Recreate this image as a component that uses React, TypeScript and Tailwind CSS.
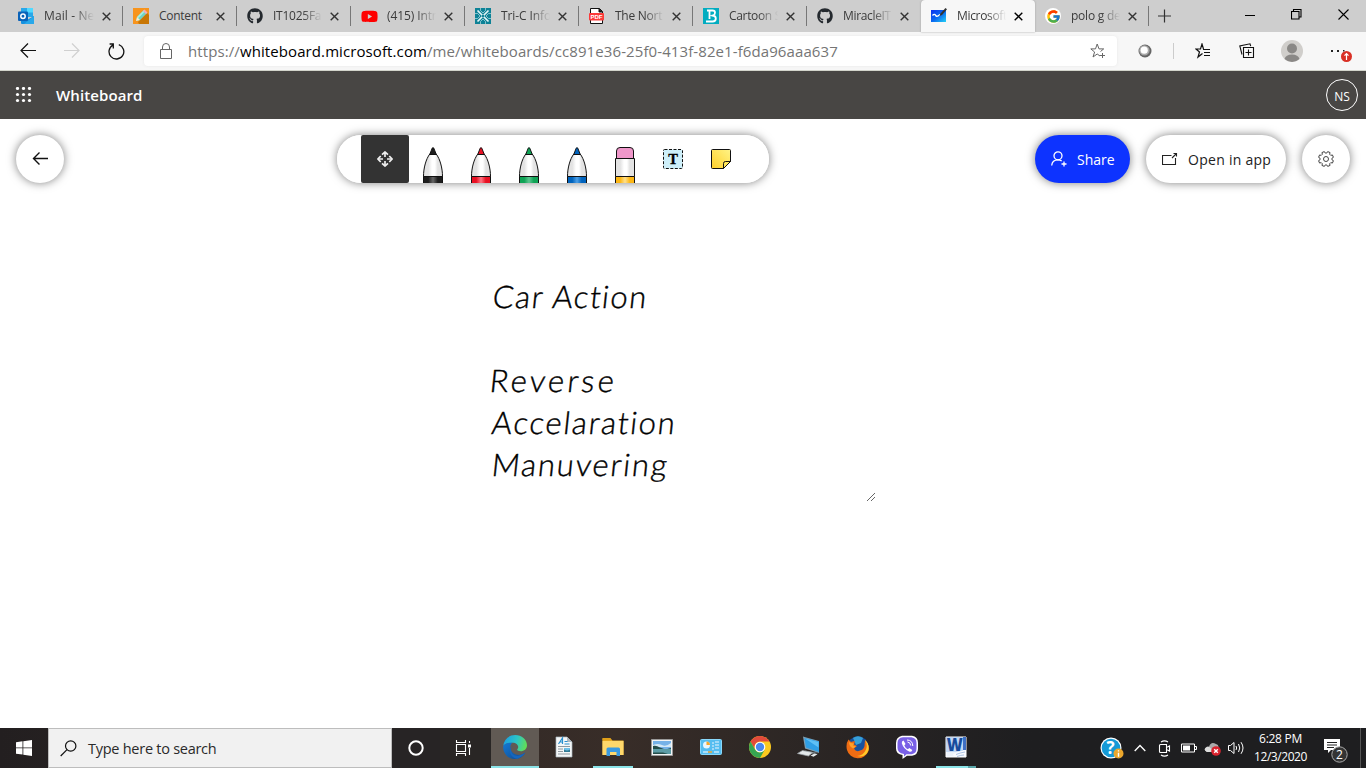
import React, { useLayoutEffect, useRef } from 'react';
import { FaGithub, FaYoutube } from 'react-icons/fa';
import { FaViber } from 'react-icons/fa';
import { FcGoogle } from 'react-icons/fc';

/** A run of text whose tracking is adjusted so that it spans `w` pixels. */
function Fit({ w, className = '', children }: { w: number; className?: string; children: React.ReactNode }) {
  const ref = useRef<HTMLSpanElement>(null);
  useLayoutEffect(() => {
    const el = ref.current;
    if (!el) return;
    el.style.letterSpacing = '0px';
    const n = (el.textContent || '').length;
    const natural = el.offsetWidth;
    if (n > 0) el.style.letterSpacing = `${(w - natural) / n}px`;
  }, [w]);
  return (
    <span ref={ref} className={`inline-block whitespace-pre ${className}`}>
      {children}
    </span>
  );
}

const OutlookIcon = () => (
  <svg width="16" height="16" viewBox="0 0 16 16">
    <path d="M3 0h12v9H3z" fill="#28a8ea" />
    <path d="M9 0h6v4.500H9z" fill="#50d9ff" />
    <path d="M3 4.500h6V9H3z" fill="#0358a7" />
    <path d="M3 8l6 4 7-4v7a1 1 0 0 1-1 1H4a1 1 0 0 1-1-1z" fill="#1490df" />
    <path d="M16 8v7a1 1 0 0 1-1 1H6z" fill="#28a8ea" />
    <rect y="3.500" width="10" height="9.500" rx="1" fill="#0a62b8" />
    <circle cx="5" cy="8.200" r="2.200" fill="none" stroke="#fff" strokeWidth="1.500" />
  </svg>
);

const PencilIcon = () => (
  <svg width="16" height="16" viewBox="0 0 16 16">
    <rect width="16" height="16" fill="#f7941d" />
    <path d="M5 14l9-9 2 2v9H6z" fill="#c87604" />
    <path d="M3 13l1-4 7-7 3 3-7 7z" fill="#6fd3c4" />
    <path d="M4 9l7-7 1.200 1.200-7 7z" fill="#a9eee0" />
    <path d="M3 13l1-4 3 3z" fill="#ffe9c8" />
    <path d="M10 3l1.500-1.500 3 3L13 6z" fill="#f5a9b8" />
  </svg>
);

const TriCIcon = () => (
  <svg width="16" height="16" viewBox="0 0 16 16">
    <rect width="16" height="16" fill="#0e8296" />
    <g stroke="#e3f5f7" strokeWidth="1.700" fill="none">
      <path d="M2.500 2.500l11 11M13.500 2.500l-11 11" />
      <path d="M5.500 0v2.500L8 5l2.500-2.500V0M5.500 16v-2.500L8 11l2.500 2.500V16M0 5.500h2.500L5 8l-2.500 2.500H0M16 5.500h-2.500L11 8l2.500 2.500H16" strokeWidth=".8" opacity=".7" />
    </g>
    <circle cx="8" cy="8" r="1.200" fill="#0e8296" />
  </svg>
);

const PdfIcon = () => (
  <svg width="16" height="16" viewBox="0 0 16 16">
    <path d="M1.500.5h9l3 3v12h-12z" fill="#fff" stroke="#111" />
    <path d="M10 .5v3.500h3.500" fill="#111" stroke="#111" />
    <rect x="0" y="5" width="15" height="7.500" rx="1" fill="#fb3a3a" />
    <text x="7.500" y="11" fontSize="6" fontWeight="700" fontFamily="Liberation Sans, sans-serif" textAnchor="middle" fill="#fff">PDF</text>
  </svg>
);

const BIcon = () => (
  <svg width="16" height="16" viewBox="0 0 16 16">
    <rect width="16" height="16" fill="#02acc0" />
    <path d="M4 2.500h5.500q2.500 0 2.500 2.300 0 2-2 2.700 2.800.6 2.800 3 0 3-3.300 3H3M6.500 3v8" fill="none" stroke="#fff" strokeWidth="1.800" />
    <path d="M8.500 7.500H10" stroke="#fff" strokeWidth="1.300" />
  </svg>
);

const BoardIcon = () => (
  <svg width="16" height="16" viewBox="0 0 16 16">
    <defs>
      <linearGradient id="board" x1="0" y1="0" x2="1" y2="1">
        <stop offset="0" stopColor="#0a30f0" />
        <stop offset=".5" stopColor="#0a66f0" />
        <stop offset="1" stopColor="#23d2f5" />
      </linearGradient>
    </defs>
    <path d="M0 2h15v12H0z" fill="url(#board)" />
    <path d="M1.500 7.500q2-2 3-.3t2.500.8l2-1.500" fill="none" stroke="#fff" strokeWidth="1.400" />
    <path d="M8.500 8l1-2.500L14.500 0 16 1.300 11 7z" fill="#333" />
  </svg>
);

const GithubTab = () => <FaGithub size={16} color="#24292e" />;
const YoutubeTab = () => (
  <span className="relative flex h-4 w-4 items-center justify-center">
    <FaYoutube size={17} color="#ff0000" className="shrink-0" />
  </span>
);
const GoogleTab = () => (
  <span className="flex h-4 w-4 items-center justify-center rounded-full bg-white">
    <FcGoogle size={15} />
  </span>
);

const tabs = [
  { label: 'Mail - Ne', w: 50, Icon: OutlookIcon },
  { label: 'Content', w: 43, Icon: PencilIcon },
  { label: 'IT1025Fa', w: 48, Icon: GithubTab },
  { label: '(415) Intr', w: 50, Icon: YoutubeTab },
  { label: 'Tri-C Info', w: 50, Icon: TriCIcon },
  { label: 'The Nort', w: 47, Icon: PdfIcon },
  { label: 'Cartoon S', w: 52, Icon: BIcon },
  { label: 'MiracleIT', w: 48, Icon: GithubTab },
  { label: 'Microsoft', w: 50, Icon: BoardIcon, active: true },
  { label: 'polo g de', w: 50, Icon: GoogleTab },
];

function TabStrip() {
  return (
    <div className="flex h-8 bg-[#cecece] pl-[9px]">
      {tabs.map(({ label, w, Icon, active }, i) => (
        <div
          key={i}
          className={
            'flex h-8 w-[114px] shrink-0 items-center ' +
            (i === 0 ? 'pl-[9px] ' : 'pl-[10px] ') +
            (active ? 'rounded-t bg-[#f7f7f7] shadow-[0_0_2px_#999]' : '')
          }
        >
          <span className="h-4 w-4 shrink-0"><Icon /></span>
          <div
            className={
              'ml-2.5 h-5 shrink-0 overflow-hidden text-[12px] leading-5 text-[#3b3b3b] ' +
              (i === 0 ? 'w-[50px] ' : 'w-[49px] ') +
              (i === 1 ? '' : 'mask-r-from-60% mask-r-to-100%')
            }
          >
            <Fit w={w}>{label}</Fit>
          </div>
          <svg className={'ml-[8px] shrink-0 ' + (active ? 'text-black' : 'text-[#333]')} width="9" height="9" viewBox="0 0 9 9">
            <path d="M.7.700l7.600 7.600M8.300.7L.7 8.300" stroke="currentColor" strokeWidth="1.400" />
          </svg>
          {active || i === 7 ? null : <span className="ml-auto h-5 w-px bg-[#777]" />}
        </div>
      ))}
      <svg className="ml-[9px] mt-[9px]" width="13" height="14" viewBox="0 0 13 14">
        <path d="M6.500 .5v13M0 7h13" stroke="#333" strokeWidth="1.200" />
      </svg>
      <div className="ml-auto flex h-7 items-center">
        <svg className="mr-9" width="10" height="11" viewBox="0 0 10 11"><path d="M0 6.500h10" stroke="#000" /></svg>
        <svg className="mr-9" width="11" height="11" viewBox="0 0 11 11">
          <path d="M.5 2.500h7.500v7.500h-7.500zM2.500 2.500v-2h7.500v7.500h-2" fill="none" stroke="#000" strokeWidth="1.100" />
        </svg>
        <svg className="mr-[17px]" width="11" height="11" viewBox="0 0 11 11"><path d="M.5.5l10 10M10.500.5l-10 10" stroke="#000" strokeWidth="1.100" /></svg>
      </div>
    </div>
  );
}

function AddressRow() {
  return (
    <div className="flex h-[39px] items-center border-b border-[#d3d5cc] bg-[#f7f7f7] pl-5">
      <svg width="16" height="16" viewBox="0 0 16 16"><path d="M16 7.500H1M8 .5l-7 7 7 7" fill="none" stroke="#111" strokeWidth="1.200" /></svg>
      <svg className="ml-7" width="16" height="16" viewBox="0 0 16 16"><path d="M0 7.500h15M8 .5l7 7-7 7" fill="none" stroke="#d0d0d0" strokeWidth="1.200" /></svg>
      <svg className="ml-7" width="17" height="17" viewBox="0 0 17 17">
        <path d="M10.800 1.600a7.400 7.400 0 1 1-5.900.5M1.600 1h3.700v4.500" fill="none" stroke="#111" strokeWidth="1.300" />
      </svg>
      <div className="ml-[19px] flex h-[30px] w-[973px] items-center rounded bg-white pl-4 shadow-[0_0_3px_#e6e6e6]">
        <svg width="12" height="17" viewBox="0 0 12 17">
          <path d="M.5 6.500h11v9H.5zM2.500 6.500V4a3.500 3.500 0 0 1 7 0v2.500" fill="none" stroke="#666" />
        </svg>
        <Fit w={650} className="ml-4 text-[15px] leading-5 text-[#757575]">
          https://<span className="text-black">whiteboard.microsoft.com</span>/me/whiteboards/cc891e36-25f0-413f-82e1-f6da96aaa637
        </Fit>
        <svg className="ml-auto mr-[11px]" width="16" height="16" viewBox="0 0 16 16">
          <path d="M10 13l-2.800-2L3 14l1.600-5L.8 5.900h4.700L7.200 1 9 5.900h4.700L10.500 8.500" fill="none" stroke="#666" />
          <path d="M12.500 10v5M10 12.500h5" stroke="#666" />
        </svg>
      </div>
      <svg className="ml-[21px]" width="14" height="14" viewBox="0 0 14 14">
        <circle cx="7" cy="7" r="6.500" fill="#656565" />
        <circle cx="6.400" cy="6.400" r="5.200" fill="#a9a9a9" />
        <circle cx="6.200" cy="6.200" r="3.600" fill="#fff" />
      </svg>
      <span className="ml-[21px] h-4 w-px bg-[#ccc]" />
      <svg className="ml-[21px]" width="16" height="16" viewBox="0 0 16 16">
        <path d="M7.500 10.500L3 14l1.500-5L1 6h4.500L7 1l1.500 5M8 6.500h7M9 9.500h6M9 12.500h6" fill="none" stroke="#111" strokeWidth="1.200" />
      </svg>
      <svg className="ml-[28px]" width="16" height="16" viewBox="0 0 16 16">
        <path d="M4.500 4.500h10v10h-10zM9.500 6.500v6M6.500 9.500h6M3 11.500L.8 3 11 .8l.7 2.400" fill="none" stroke="#111" strokeWidth="1.100" />
      </svg>
      <svg className="ml-[26px]" width="22" height="22" viewBox="0 0 22 22">
        <circle cx="11" cy="11" r="11" fill="#d0cecb" />
        <circle cx="11" cy="8.500" r="5" fill="#8a8886" />
        <path d="M3.500 19q1.300-4.500 7.500-4.500t7.500 4.500q-3.500 3-7.500 3t-7.500-3" fill="#8a8886" />
      </svg>
      <svg className="ml-[27px] mt-2.5" width="24" height="22" viewBox="0 0 24 22">
        <path d="M1 5h2v2H1zM7 5h2v2H7zM13 5h1.500v1.500H13z" fill="#222" />
        <circle cx="16.500" cy="11.500" r="5.500" fill="#d93025" />
        <path d="M16.500 15V9M14.500 10.700l2-2 2 2" fill="none" stroke="#fff" strokeWidth="1.200" />
      </svg>
    </div>
  );
}

function AppHeader() {
  return (
    <div className="flex h-12 items-center bg-[#484644] pl-[15px] pr-2">
      <svg width="17" height="16" viewBox="0 0 17 16" fill="#fff">
        {[1.500, 7.500, 13.500].map((y) => [2.500, 8.500, 14.500].map((x) => <circle key={`${x}-${y}`} cx={x} cy={y} r="1.600" />))}
      </svg>
      <Fit w={86} className="ml-6 text-[15px] font-semibold text-white">Whiteboard</Fit>
      <span className="ml-auto flex h-8 w-8 items-center justify-center rounded-full border border-white pt-[3px] text-[12px] text-white">NS</span>
    </div>
  );
}

function Pen({ id, dark, light }: { id: string; dark: string; light: string }) {
  return (
    <svg width="48" height="48" viewBox="0 0 48 48">
      <defs>
        <linearGradient id={id}>
          <stop offset=".25" stopColor={dark} />
          <stop offset=".5" stopColor={light} />
          <stop offset=".75" stopColor={dark} />
        </linearGradient>
        <linearGradient id={`${id}-body`}>
          <stop offset=".25" stopColor="#e3e3e3" />
          <stop offset=".45" stopColor="#fff" />
          <stop offset=".6" stopColor="#fff" />
          <stop offset=".75" stopColor="#e3e3e3" />
        </linearGradient>
      </defs>
      <path d="M14.500 41.500C14.500 33 17 24 20.800 19h6.400C31 24 33.500 33 33.500 41.500z" fill={`url(#${id}-body)`} stroke="#111" />
      <path d="M14.500 41.500h19V49h-19z" fill={`url(#${id})`} stroke="#111" />
      <path d="M20.700 19.500l2.500-6.300q.8-1.400 1.600 0l2.500 6.300z" fill={dark} stroke="#111" />
    </svg>
  );
}

function Toolbar() {
  return (
    <div className="flex h-12 w-[432px] overflow-hidden rounded-full bg-white px-6">
      <div className="flex h-12 w-12 items-center justify-center rounded-[2px] bg-[#333]">
        <svg width="16" height="16" viewBox="0 0 16 16">
          <g fill="none" stroke="#eee" strokeWidth="1.700">
            <path d="M5 3.700L8 1l3 2.700M5 12.300L8 15l3-2.700M3.700 5L1 8l2.700 3M12.300 5L15 8l-2.700 3" />
            <path d="M8 1.500V6M8 10v4.500M1.500 8H6M10 8h4.500" />
          </g>
        </svg>
      </div>
      <Pen id="pen-black" dark="#1d1d1d" light="#666" />
      <Pen id="pen-red" dark="#e81123" light="#ff7684" />
      <Pen id="pen-green" dark="#0fa355" light="#5ec590" />
      <Pen id="pen-blue" dark="#0063bd" light="#4d9fe6" />
      <svg width="48" height="48" viewBox="0 0 48 48">
        <defs>
          <linearGradient id="eraser">
            <stop offset=".25" stopColor="#fdb714" />
            <stop offset=".5" stopColor="#ffe08c" />
            <stop offset=".75" stopColor="#fdb714" />
          </linearGradient>
        </defs>
        <path d="M15.500 24V16q0-3.500 3.500-3.500h10q3.500 0 3.500 3.500v8z" fill="#ef97ca" stroke="#111" />
        <path d="M14.500 23.500h19v18h-19z" fill="url(#pen-black-body)" stroke="#111" />
        <path d="M14.500 41.500h19V49h-19z" fill="url(#eraser)" stroke="#111" />
      </svg>
      <svg width="48" height="48" viewBox="0 0 48 48">
        <rect x="14.500" y="14.500" width="19" height="19" rx="1" fill="#cdeffa" stroke="#111" strokeDasharray="3 1.500" />
        <text x="24" y="29" textAnchor="middle" fontFamily="Liberation Serif, serif" fontWeight="700" fontSize="14.500" stroke="#000" strokeWidth=".3">T</text>
      </svg>
      <svg width="48" height="48" viewBox="0 0 48 48">
        <defs>
          <linearGradient id="note" x1="0" y1="1" x2="1" y2="0">
            <stop offset="0" stopColor="#ffd02b" />
            <stop offset="1" stopColor="#fff486" />
          </linearGradient>
        </defs>
        <path d="M15.500 14.500h17q1 0 1 1v11l-7 7h-11q-1 0-1-1v-17q0-1 1-1z" fill="url(#note)" stroke="#111" />
        <path d="M26.500 33.500v-5q0-2 2-2h5z" fill="#ffe65a" stroke="#111" />
      </svg>
    </div>
  );
}

const shadow = 'shadow-[0_0_10px_rgba(0,0,0,0.5)]';

const gearPath = (() => {
  const pts: string[] = [];
  for (let i = 0; i < 8; i++) {
    const base = (i * Math.PI) / 4 + Math.PI / 8;
    [[-0.26, 6], [-0.17, 7.600], [0.17, 7.600], [0.26, 6]].forEach(([a, r]) =>
      pts.push(`${(8 + r * Math.sin(base + a)).toFixed(2)} ${(8 - r * Math.cos(base + a)).toFixed(2)}`),
    );
  }
  return `M${pts.join('L')}Z`;
})();

function Whiteboard() {
  return (
    <div className="flex h-[609px] flex-col bg-white p-4">
      <div className="flex h-12">
        <button className={`flex h-12 w-12 items-center justify-center rounded-full bg-white ${shadow}`}>
          <svg width="16" height="14" viewBox="0 0 16 14"><path d="M16 6.500H1.500M7.500.5l-6 6 6 6" fill="none" stroke="#111" strokeWidth="1.400" /></svg>
        </button>
        <div className={`ml-[273px] rounded-full ${shadow}`}><Toolbar /></div>
        <div className="ml-auto flex gap-4">
          <button className={`flex h-12 w-[95px] items-center rounded-full bg-[#0d33ff] pl-4 text-white ${shadow}`}>
            <svg width="17" height="16" viewBox="0 0 17 16">
              <circle cx="7" cy="4.800" r="4" fill="none" stroke="#fff" strokeWidth="1.300" />
              <path d="M.7 14.500C1 11 3.500 8.800 7 8.800q2 0 3.700 1.200M13 10.500v5M10.500 13h5" fill="none" stroke="#fff" strokeWidth="1.300" />
            </svg>
            <Fit w={38} className="ml-[9px] text-[14px] font-medium">Share</Fit>
          </button>
          <button className={`flex h-12 w-[140px] items-center rounded-full bg-white pl-4 text-[#222] ${shadow}`}>
            <svg width="16" height="14" viewBox="0 0 16 14"><path d="M9.500 3.500H.5v9h13V6M10 6l4.500-4.500M11.500 1.500h3v3" fill="none" stroke="#222" strokeWidth="1.100" /></svg>
            <Fit w={83} className="ml-[10px] text-[14px]">Open in app</Fit>
          </button>
          <button className={`flex h-12 w-12 items-center justify-center rounded-full bg-white ${shadow}`}>
            <svg width="16" height="16" viewBox="0 0 16 16">
              <path d={gearPath} fill="none" stroke="#333" strokeWidth=".9" />
              <circle cx="8" cy="8" r="2.500" fill="none" stroke="#333" strokeWidth=".9" />
            </svg>
          </button>
        </div>
      </div>
      <div className="ml-[469px] mt-[92px] flex h-[227px] w-[391px] flex-col font-['Lato',sans-serif] text-[31px] font-light leading-[42px] text-black [-webkit-text-stroke:0.4px_black]">
        <div className="flex h-[42px] pl-[8px]"><Fit w={156} className="-skew-x-6">Car Action</Fit></div>
        <div className="h-[42px]" />
        <div className="flex h-[42px] pl-[5px]"><Fit w={127} className="-skew-x-6">Reverse</Fit></div>
        <div className="flex h-[42px] pl-[7px]"><Fit w={185} className="-skew-x-6">Accelaration</Fit></div>
        <div className="flex h-[42px] pl-[7px]"><Fit w={177} className="-skew-x-6">Manuvering</Fit></div>
        <svg className="ml-auto mt-auto" width="10" height="10" viewBox="0 0 10 10"><path d="M1 9l8-8M5 9l4-4" stroke="#666" /></svg>
      </div>
    </div>
  );
}

const EdgeIcon = () => (
  <svg width="24" height="24" viewBox="0 0 24 24">
    <defs>
      <linearGradient id="edge-top" x1="0" y1=".3" x2="1" y2=".5">
        <stop offset="0" stopColor="#1b9de2" /><stop offset=".55" stopColor="#2cc5c7" /><stop offset="1" stopColor="#62dd55" />
      </linearGradient>
      <linearGradient id="edge-low" x1="0" y1="0" x2="1" y2="1">
        <stop offset="0" stopColor="#1478d4" /><stop offset="1" stopColor="#114a8b" />
      </linearGradient>
    </defs>
    <path d="M.2 10.800C1 4.500 6 0 12.200 0 18.700 0 24 4.500 24 10.300c0 3.700-3 6-6.300 6-2.700 0-4.200-.9-3.200-2.200 2-2.800-.3-6.400-5-6.400-4 0-7.500 1.200-9.300 3.100z" fill="url(#edge-top)" />
    <path d="M.2 11C1.800 8.500 5.400 7.500 9.500 7.700 6 10 6.300 18.300 14 19.800c3 .5 6-.3 8.300-2.200C20.300 21.500 16.500 24 12 24 5 24-.3 18 .2 11z" fill="url(#edge-low)" />
    <path d="M9.500 10.500C6 15 9 22 16 20.500c2.500-.4 4.500-1.400 6.300-2.900-1 2.400-4 5.200-7.800 6.100C8 23 4 16 9.500 10.500z" fill="#1666bd" />
  </svg>
);

const WordPadIcon = () => (
  <svg width="18" height="22" viewBox="0 0 18 22">
    <path d="M1 1h11l5 5v15H1z" fill="#f5f7f8" stroke="#a9b4bb" strokeWidth=".7" />
    <path d="M12 1v5h5z" fill="#aeb8bf" />
    <path d="M3.500 8l4-6v6M5 6h3M9.500 5.500h3M9.500 8h5" fill="none" stroke="#2a90cf" strokeWidth="1.200" />
    <path d="M3 10.500h12M3 13h5M3 15.500h5M3 18h12" stroke="#8f999f" />
    <path d="M9 12h6v4H9z" fill="#317b94" />
    <path d="M9 12h6v1.500q-3 2-6 0z" fill="#6fc0e8" />
  </svg>
);

const FolderIcon = () => (
  <svg width="22" height="20" viewBox="0 0 22 20">
    <path d="M.5 1.500h8l2 2h11V18H.5z" fill="#f0b228" />
    <path d="M.5 4h21v14H.5z" fill="#ffd86b" />
    <path d="M.5 1h8l1 2.500H.5z" fill="#e0a019" />
    <path d="M4.500 19v-7q0-1.500 1.500-1.500h10.500q1.500 0 1.500 1.500v7h-3.500v-4H8v4z" fill="#3b9ae0" />
  </svg>
);

const PictureIcon = () => (
  <svg width="22" height="17" viewBox="0 0 22 17">
    <path d="M.5.5h21v16H.5z" fill="#f4f4f4" stroke="#999" />
    <path d="M2 2h18v13H2z" fill="#76b2e8" />
    <path d="M2 6q5-2 9 0t9-2v4H2z" fill="#d3e8f6" />
    <path d="M2 7q3-1 7 1.500l4 1.500H2zM20 9q-4 1-7 1.500L20 11z" fill="#234d4a" />
    <path d="M2 10h18v5H2z" fill="#5c9ca6" />
    <path d="M2 13.500h10l5 1.500H2z" fill="#254d49" />
  </svg>
);

const PanelIcon = () => (
  <svg width="22" height="16" viewBox="0 0 22 16">
    <rect x=".5" y=".5" width="21" height="15" rx="1" fill="#55bdf0" stroke="#8ad8fa" />
    <circle cx="6.500" cy="6" r="3.500" fill="#e9f6fd" />
    <path d="M6.500 6V2.500A3.500 3.500 0 0 1 10 6z" fill="#f5a62c" />
    <path d="M12 4h2M12 7h2M12 10h2M15 3h4M15 6h4M15 9h4" stroke="#e9f6fd" strokeWidth="1.200" />
    <path d="M3 13h5M14 13h5" stroke="#fff" strokeWidth="1.200" />
    <path d="M8 13h4" stroke="#f5a62c" strokeWidth="1.400" />
  </svg>
);

const ChromeIcon = () => (
  <svg width="22" height="22" viewBox="0 0 22 22">
    <circle cx="11" cy="11" r="11" fill="#fbc91f" />
    <path d="M1.500 5.500A11 11 0 0 1 20.500 5.500H11A5.500 5.500 0 0 0 6.200 13.700z" fill="#e14a3b" />
    <path d="M1.500 5.500L6.200 13.700Q8 16.600 11 16.600L15.700 13.800 11 22A11 11 0 0 1 1.500 5.500z" fill="#35a552" />
    <circle cx="11" cy="11" r="5.300" fill="#fff" />
    <circle cx="11" cy="11" r="4.200" fill="#4a88ee" />
  </svg>
);

const PcIcon = () => (
  <svg width="23" height="22" viewBox="0 0 23 22">
    <path d="M6 .5l1.500.5L22 5v12L8 12.500z" fill="#7d9fb4" />
    <path d="M7.500 2L22 5.500v10.500L9 11.500z" fill="#2f9fe6" />
    <path d="M8 2.500l13.500 3.500v5.500z" fill="#5fc0f5" />
    <path d="M8 14.500l14 2.500-8 1-6-1.500z" fill="#70797e" />
    <path d="M.5 17.500l5-3 10 2-4 3.500z" fill="#e4e8ea" stroke="#9ca5a9" strokeWidth=".7" />
    <path d="M13.500 19.500l4-2 3 .7-4 2.500z" fill="#e4e8ea" />
  </svg>
);

const FirefoxIcon = () => (
  <svg width="23" height="23" viewBox="0 0 23 23">
    <circle cx="12" cy="10.500" r="10.300" fill="#18529e" />
    <path d="M7 2q5-3.500 10 0l-2 5-5 2z" fill="#37a0d8" />
    <path d="M2.500 3.500L5 6q2-1 4-.7L8 8.500l3 1.500-3 2.500q2 4 6 2 3.500-.5 4.500-4.500L19 4q5 5 3.500 11A11.300 11.300 0 0 1 1 14Q-.5 8 2.500 3.500z" fill="#ee6c13" />
    <path d="M19 4q3 5 1 9.500-2.500 6-9 6.500 9 2 11.500-6Q23.500 8 19 4z" fill="#ffc928" />
    <path d="M3 6l2 1 3 .5-1 2 3 1-3 2q-4-2-4-6.500z" fill="#ffa02a" />
  </svg>
);

const ViberIcon = () => (
  <svg width="24" height="24" viewBox="0 0 24 24">
    <path d="M7 .8h10q6 1 6 7v6q0 6-6 7h-5L7.500 24v-4Q1 19 1 13.500V8Q1 2 7 .8z" fill="#fff" />
    <path d="M8 2.300h8.500q5 .8 5 5.700v5.500q0 5-5 5.700h-5L9 21.500V19Q2.500 18 2.500 13V8q0-5 5.500-5.700z" fill="#7960e6" />
    <path d="M8.500 5.500q-2 .8-1.700 2.700 1.800 6 7.800 8.500 2 .3 2.700-1.800l-3-2-1.500 1.300q-2.500-1-3.500-3.600L10.500 9z" fill="#fff" />
    <path d="M12 5q5.500 0 5.800 6M12.500 7q3 .3 3.200 3.500" fill="none" stroke="#fff" />
  </svg>
);

const WordIcon = () => (
  <svg width="22" height="22" viewBox="0 0 22 22">
    <path d="M1 1h20v20H1z" fill="#edf3fb" stroke="#fff" />
    <path d="M18 1h3v13h-3z" fill="#3f6fc4" />
    <path d="M1 1h17v15H1z" fill="#c2d7f3" />
    <text x="9.700" y="15" textAnchor="middle" textLength="16" lengthAdjust="spacingAndGlyphs" fontFamily="Open Sans, sans-serif" fontSize="17" fontWeight="800" fill="#174b9c">W</text>
    <path d="M8 18q6-3 13-4v7H9z" fill="#fafcff" />
    <path d="M11 18.500q5-2 9-2.500M12 20.500q4-1.500 7-1.500" fill="none" stroke="#8eabd7" strokeWidth=".7" />
  </svg>
);

const apps = [
  { Icon: EdgeIcon, active: true },
  { Icon: WordPadIcon },
  { Icon: FolderIcon, open: true },
  { Icon: PictureIcon },
  { Icon: PanelIcon },
  { Icon: ChromeIcon },
  { Icon: PcIcon },
  { Icon: FirefoxIcon },
  { Icon: ViberIcon },
  { Icon: WordIcon, stacked: true },
];

function Taskbar() {
  return (
    <div className="flex h-10 bg-linear-to-r from-[#231f20] via-[#382d28] via-45% to-[#1e1e20] to-75%">
      <div className="flex w-12 items-center justify-center">
        <svg width="16" height="16" viewBox="0 0 16 16" fill="#fff"><path d="M0 2.200L6.500 1.300v6.200H0zM7.300 1.200L16 0v7.500H7.300zM0 8.300h6.500v6.300L0 13.800zM7.300 8.300H16V16l-8.700-1.300z" /></svg>
      </div>
      <div className="flex w-[344px] items-center border border-[#bdbdbd] bg-[#f1f1f1] pl-[11px]">
        <svg width="17" height="17" viewBox="0 0 17 17"><circle cx="10.700" cy="6" r="5.200" fill="none" stroke="#111" strokeWidth="1.200" /><path d="M7 9.700L.7 16" stroke="#111" strokeWidth="1.200" /></svg>
        <Fit w={128} className="ml-[11px] mt-px text-[14.500px] text-[#2a2a2a]">Type here to search</Fit>
      </div>
      <div className="flex w-12 items-center justify-center bg-[#272425]">
        <svg width="16" height="16" viewBox="0 0 16 16"><circle cx="8" cy="8" r="6.700" fill="none" stroke="#fff" strokeWidth="2" /></svg>
      </div>
      <div className="flex w-[51px] items-center bg-[#292625] pl-[15px]">
        <svg width="17" height="16" viewBox="0 0 17 16">
          <path d="M1.500 0v2.500h9V0M1.500 16v-2.500h9V16M1.500 4.500h9v7h-9zM14.500 1v2M14.500 8v7" fill="none" stroke="#fff" strokeWidth="1.100" />
          <path d="M13 4.500h3v3h-3z" fill="#fff" />
        </svg>
      </div>
      {apps.map(({ Icon, active, open, stacked }, i) => (
        <div key={i} className={'flex flex-col items-center ' + (active ? 'w-12 bg-[#615a54]' : 'w-[49px]')}>
          <div className="flex h-[38px] items-center justify-center"><Icon /></div>
          {active && <div className="h-0.5 w-full bg-[#8be4e8]" />}
          {open && <div className="h-0.5 w-10 bg-[#8be4e8]" />}
          {stacked && <div className="flex h-0.5 w-10"><div className="w-8 bg-[#8be4e8]" /><div className="w-2 bg-[#5aa6aa]" /></div>}
        </div>
      ))}
      <div className="ml-auto flex items-center">
        <svg width="24" height="22" viewBox="0 0 24 22">
          <circle cx="11" cy="11" r="10.500" fill="#fff" />
          <circle cx="11" cy="11" r="9.300" fill="#159ad7" />
          <text x="10.500" y="17" textAnchor="middle" fontSize="17" fontWeight="700" fontFamily="Open Sans, sans-serif" fill="#fff">?</text>
          <circle cx="18.500" cy="16.500" r="5" fill="#eca72c" />
          <path d="M18.500 13.300v1.300M18.500 15.800v4" stroke="#fff" strokeWidth="1.400" />
        </svg>
        <svg className="ml-[10px]" width="12" height="8" viewBox="0 0 12 8"><path d="M.7 7L6 1.500 11.300 7" fill="none" stroke="#fff" strokeWidth="1.300" /></svg>
        <svg className="ml-[12px]" width="13" height="17" viewBox="0 0 13 17"><path d="M2.500 4.500h6v8h-6q-1 0-1-1v-6q0-1 1-1zM8.500 7h1l2-1v5l-2-1h-1M3 2Q6.500-.3 10 2M3 15q3.500 2.300 7 0" fill="none" stroke="#fff" strokeWidth="1.100" /></svg>
        <svg className="ml-[10px]" width="16" height="10" viewBox="0 0 16 10"><path d="M.5 1h13v8H.5zM14 3.500h1.500v3H14" fill="none" stroke="#fff" /><path d="M2 2.500h7v5H2z" fill="#fff" /></svg>
        <svg className="ml-[7px] mt-0.5" width="18" height="14" viewBox="0 0 18 14">
          <path d="M3 10Q-1 8 2 5.500q1-1.500 3-.8Q7-1 12 2q3 .5 2.500 4L13 10z" fill="#aaa" />
          <path d="M3 10Q-1 8 2 5.500q3-2 5 1L10 10z" fill="#ddd" />
          <circle cx="12" cy="9" r="4.800" fill="#d9232e" />
          <path d="M10.200 7.200l3.600 3.600M13.800 7.200l-3.600 3.600" stroke="#fff" strokeWidth="1.400" />
        </svg>
        <svg className="ml-[6px]" width="17" height="14" viewBox="0 0 17 14"><path d="M.5 4.500h2l3.500-3v11l-3.500-3h-2zM8 5q1.300 2 0 4M10.500 3q2.500 4 0 8M13 1.200q4 5.800 0 11.600" fill="none" stroke="#fff" /></svg>
        <div className="ml-[9px] flex w-[53px] flex-col items-center text-[12px] leading-[18px] text-white">
          <Fit w={43}>6:28 PM</Fit>
          <Fit w={53}>12/3/2020</Fit>
        </div>
        <svg className="ml-[17px] mt-1" width="25" height="25" viewBox="0 0 25 25">
          <path d="M0 1h16v11H7l-3 3v-3H0z" fill="#fff" />
          <path d="M3 4.500h10M3 7h10M3 9.500h7" stroke="#222" />
          <circle cx="15.500" cy="16.500" r="7.700" fill="#343434" stroke="#aaa" />
          <text x="15.500" y="21" textAnchor="middle" fontFamily="Open Sans, sans-serif" fontSize="12" fill="#fff">2</text>
        </svg>
        <span className="ml-[11px] mr-[5px] h-10 w-px bg-[#555]" />
      </div>
    </div>
  );
}

export default function App() {
  return (
    <div className="h-[768px] w-[1366px] overflow-hidden bg-white font-['Open_Sans',sans-serif]">
      <TabStrip />
      <AddressRow />
      <AppHeader />
      <Whiteboard />
      <Taskbar />
    </div>
  );
}
